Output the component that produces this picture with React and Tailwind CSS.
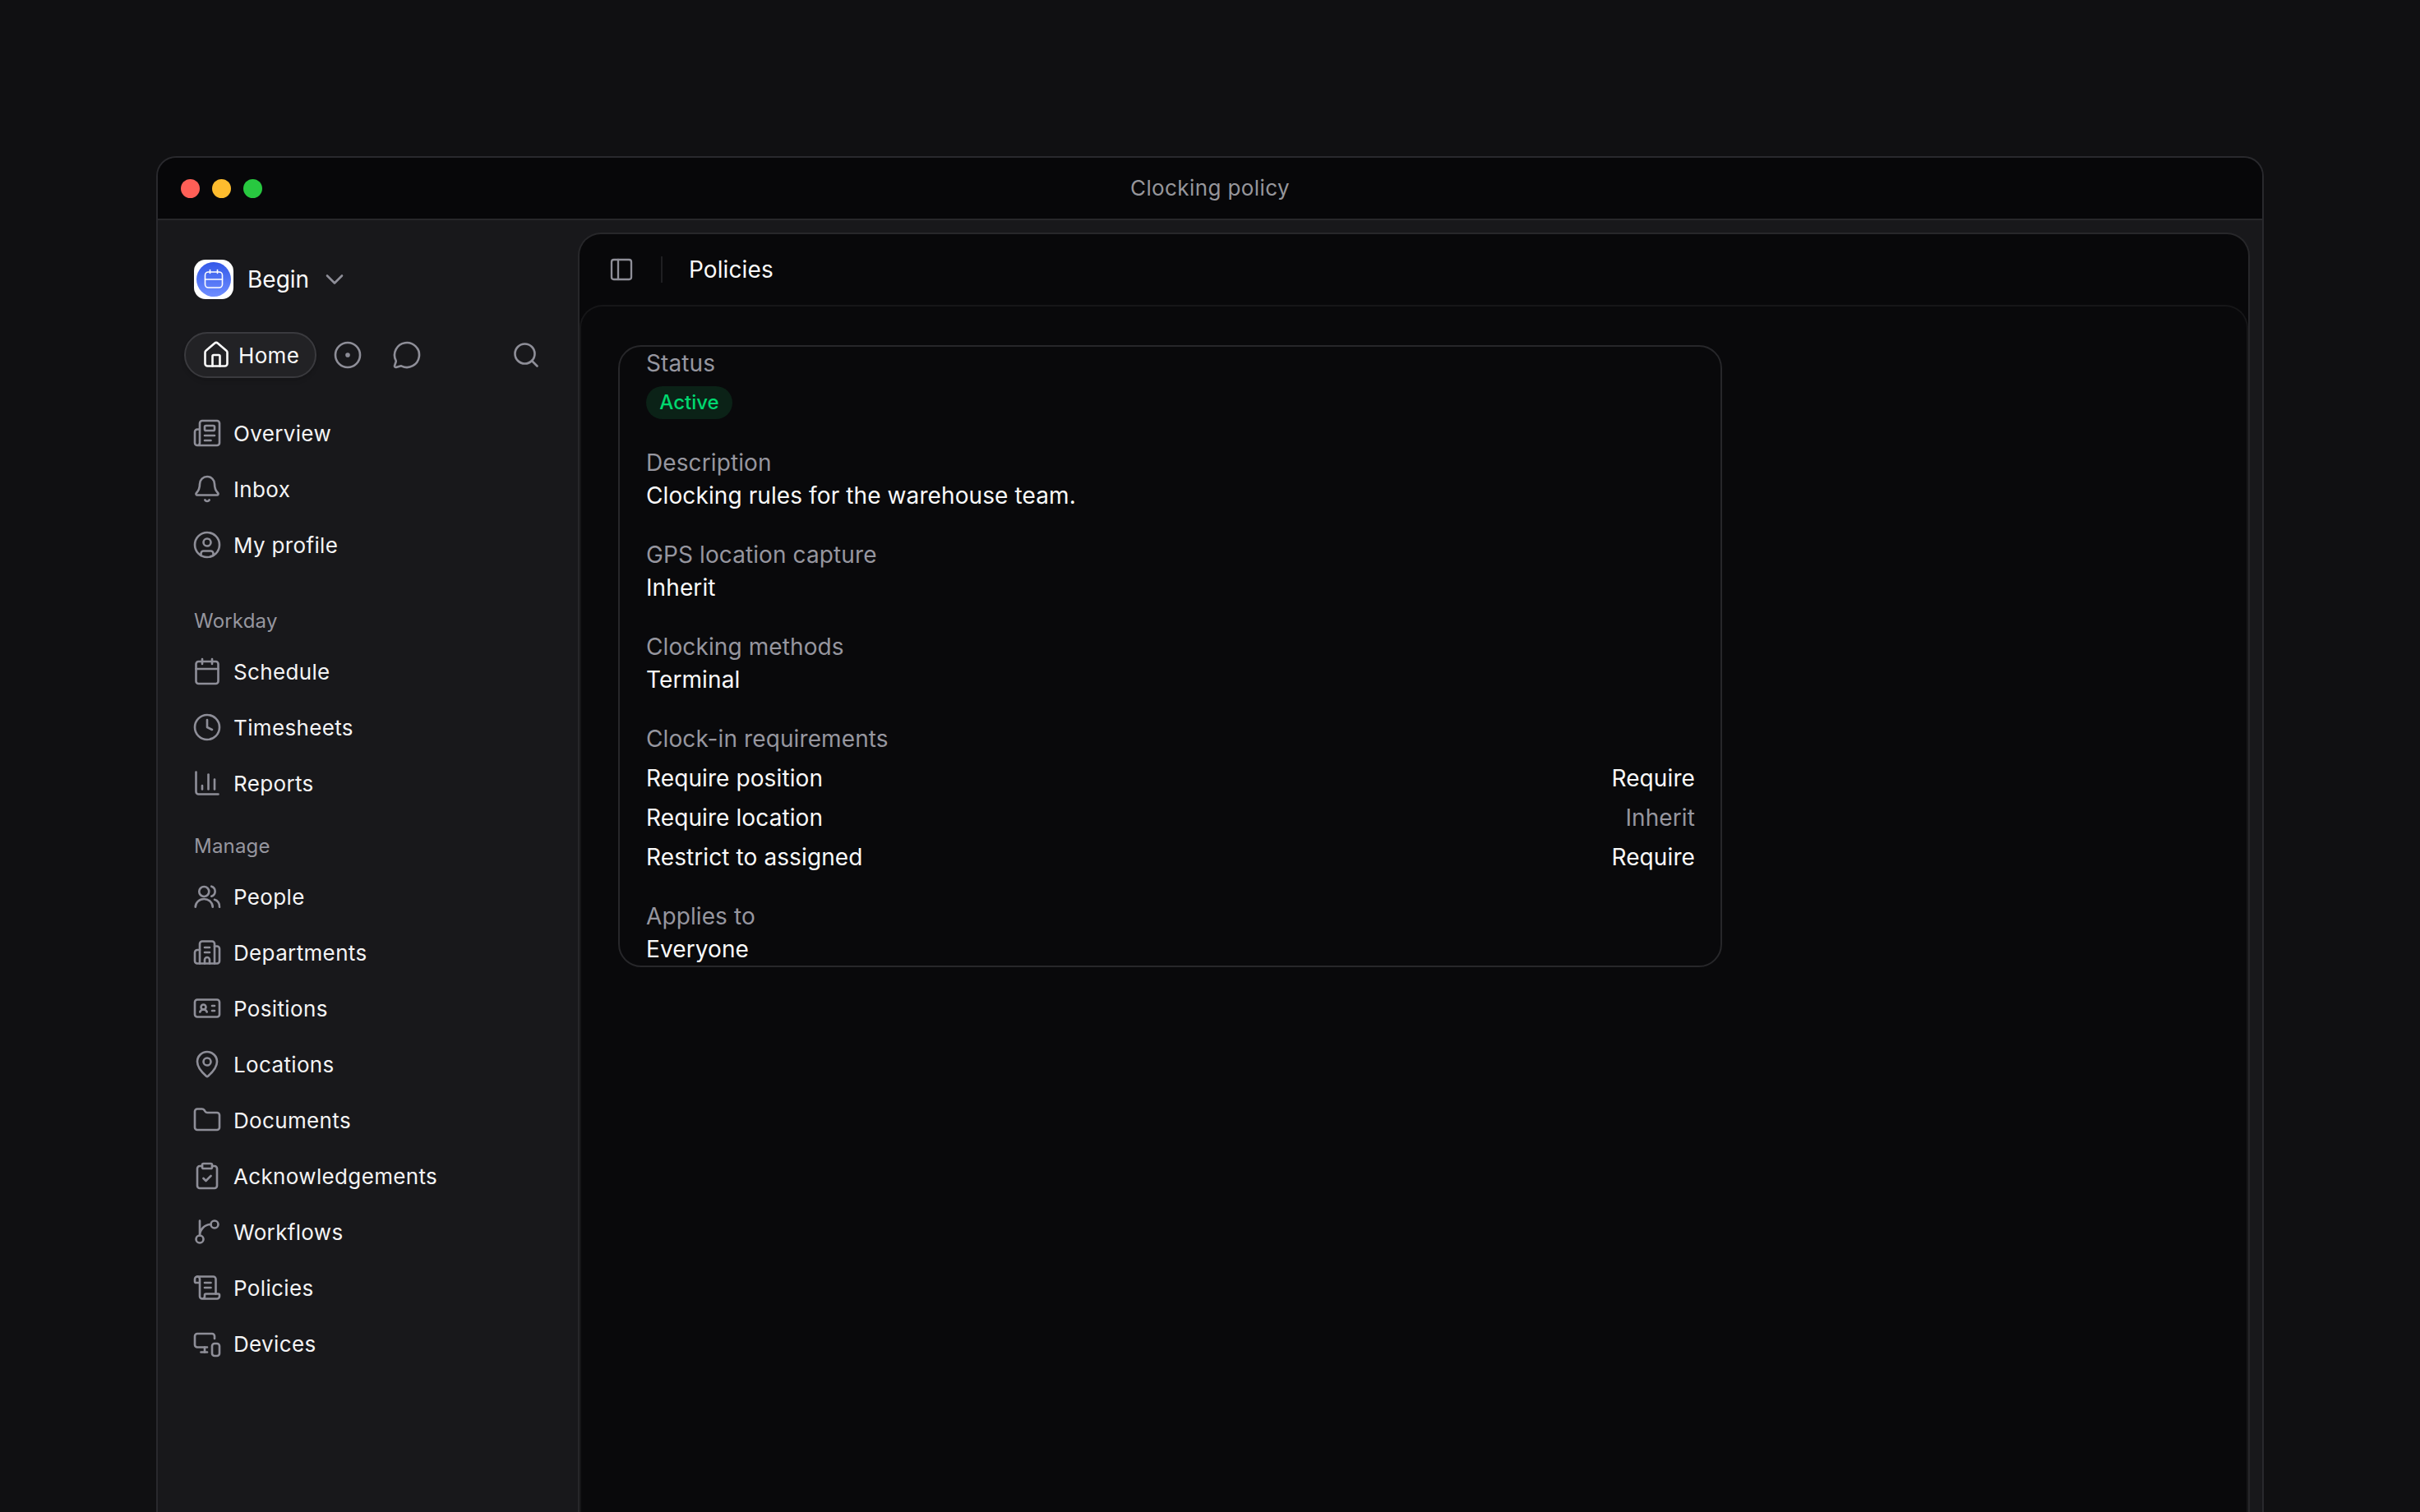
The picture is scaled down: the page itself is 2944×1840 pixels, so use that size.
import React from 'react';
import {
  Bell,
  Building2,
  Calendar,
  ChartColumn,
  ChevronDown,
  CircleDot,
  CircleUser,
  ClipboardCheck,
  Clock,
  Folder,
  House,
  IdCard,
  MapPin,
  MessageCircle,
  MonitorSmartphone,
  Newspaper,
  PanelLeft,
  ScrollText,
  Search,
} from 'lucide-react';

const PeopleIcon = ({ size, strokeWidth, className }) => (
  <svg width={size} height={size} viewBox="0 0 24 24" fill="none" stroke="currentColor" strokeWidth={strokeWidth} strokeLinecap="round" strokeLinejoin="round" className={className}>
    <circle cx="9.5" cy="8" r="4" />
    <path d="M15.5 3.8a4.2 4.2 0 0 1 0 8" />
    <path d="M2.5 20.5a7 6.5 0 0 1 14 0" />
    <path d="M18 14.5a5 5.5 0 0 1 4 6" />
  </svg>
);

const WorkflowIcon = ({ size, strokeWidth, className }) => (
  <svg width={size} height={size} viewBox="0 0 24 24" fill="none" stroke="currentColor" strokeWidth={strokeWidth} strokeLinecap="round" strokeLinejoin="round" className={className}>
    <path d="M15 6a9 9 0 0 0-9 9V3" />
    <circle cx="18" cy="6" r="3" />
    <circle cx="6" cy="18" r="3" />
  </svg>
);

const topItems = [
  { label: 'Overview', icon: Newspaper },
  { label: 'Inbox', icon: Bell },
  { label: 'My profile', icon: CircleUser },
];

const workdayItems = [
  { label: 'Schedule', icon: Calendar },
  { label: 'Timesheets', icon: Clock },
  { label: 'Reports', icon: ChartColumn },
];

const manageItems = [
  { label: 'People', icon: PeopleIcon },
  { label: 'Departments', icon: Building2 },
  { label: 'Positions', icon: IdCard },
  { label: 'Locations', icon: MapPin },
  { label: 'Documents', icon: Folder },
  { label: 'Acknowledgements', icon: ClipboardCheck },
  { label: 'Workflows', icon: WorkflowIcon },
  { label: 'Policies', icon: ScrollText },
  { label: 'Devices', icon: MonitorSmartphone },
];

const NavItem = ({ label, icon: Icon }) => (
  <div className="flex h-[68px] items-center gap-[14px] pl-[42px]">
    <Icon size={36} strokeWidth={1.75} className="shrink-0 text-[#8e8e98]" />
    <span className="text-[26px] tracking-[0.35px] text-[#f4f4f5]">{label}</span>
  </div>
);

const SectionLabel = ({ children, className }) => (
  <div className={`mb-[9px] flex h-9 items-center pl-[44px] text-[24px] tracking-[0.2px] text-[#96969f] ${className}`}>
    {children}
  </div>
);

const Field = ({ label, children }) => (
  <div className="flex flex-col">
    <div className="h-10 text-[28px] leading-10 tracking-[0.1px] text-[#96969f]">{label}</div>
    <div className="h-10 text-[28px] leading-10 tracking-[0.1px] text-[#fafafa]">{children}</div>
  </div>
);

const RequirementRow = ({ label, value, muted }) => (
  <div className="flex h-10 items-center justify-between text-[28px] leading-10 tracking-[0.1px] text-[#fafafa]">
    <span>{label}</span>
    <span className={muted ? 'text-[#96969f]' : ''}>{value}</span>
  </div>
);

const App = () => {
  return (
    <div className="h-[1840px] overflow-hidden bg-[#101012] px-[190px] pt-[190px] font-['Inter',sans-serif]">
      <div className="flex h-[1700px] flex-col rounded-t-[24px] border-2 border-b-0 border-[#29292d] bg-[#18181b]">
        <div className="relative flex h-[76px] shrink-0 items-center justify-center rounded-t-[22px] border-b-2 border-[#27272a] bg-[#070709]">
          <div className="absolute left-[28px] top-[26px] flex gap-[15px]">
            <span className="h-[23px] w-[23px] rounded-full bg-[#ff5f57]" />
            <span className="h-[23px] w-[23px] rounded-full bg-[#febc2e]" />
            <span className="h-[23px] w-[23px] rounded-full bg-[#28c840]" />
          </div>
          <span className="mb-px text-[26px] tracking-[0.4px] text-[#96969b]">Clocking policy</span>
        </div>

        <div className="flex flex-1">
          <aside className="w-[511px] shrink-0 pt-[48px]">
            <div className="flex h-12 items-center pl-[44px]">
              <div className="flex h-12 w-12 items-center justify-center rounded-[14px] bg-white">
                <div className="flex h-[42px] w-[42px] items-center justify-center rounded-[50%] bg-gradient-to-b from-[#3458e8] to-[#6f8dff]">
                  <svg width="28" height="28" viewBox="0 0 28 28" fill="none" stroke="white" strokeWidth="1.6" strokeLinecap="round">
                    <rect x="3.5" y="5" width="21" height="19" rx="4" />
                    <path d="M3.5 14h21" />
                    <path d="M9.5 2.5v4" />
                    <path d="M18.5 2.5v4" />
                  </svg>
                </div>
              </div>
              <span className="ml-[17px] text-[28px] text-[#fafafa]">Begin</span>
              <ChevronDown size={36} strokeWidth={1.75} className="ml-[13px] text-[#8e8e98]" />
            </div>

            <div className="mt-10 flex h-14 items-center pl-[32px] pr-[45px]">
              <div className="flex h-14 w-[161px] items-center gap-[9px] rounded-full border-2 border-[#3a3a3e] bg-[#222225] pl-[19px] shadow-md">
                <House size={36} strokeWidth={1.75} className="shrink-0 text-[#fafafa]" />
                <span className="text-[26px] tracking-[0.35px] text-[#fafafa]">Home</span>
              </div>
              <CircleDot size={36} strokeWidth={1.75} className="ml-5 text-[#8e8e98]" />
              <MessageCircle size={36} strokeWidth={1.75} className="ml-9 text-[#8e8e98]" />
              <Search size={36} strokeWidth={1.75} className="ml-auto text-[#8e8e98]" />
            </div>

            <nav className="mt-[33px]">
              {topItems.map((item) => (
                <NavItem key={item.label} {...item} />
              ))}
              <SectionLabel className="mt-[41px]">Workday</SectionLabel>
              {workdayItems.map((item) => (
                <NavItem key={item.label} {...item} />
              ))}
              <SectionLabel className="mt-[25px]">Manage</SectionLabel>
              {manageItems.map((item) => (
                <NavItem key={item.label} {...item} />
              ))}
            </nav>
          </aside>

          <main className="mr-[15px] mt-[15px] flex flex-1 flex-col rounded-t-[28px] border-2 border-b-0 border-[#27272a] bg-[#08080a]">
            <div className="flex h-[86px] shrink-0 items-center pl-[35px]">
              <PanelLeft size={32} strokeWidth={1.75} className="text-[#8e8e98]" />
              <div className="ml-[32px] h-8 w-0.5 bg-[#1f1f22]" />
              <span className="ml-[32px] text-[28px] tracking-[0.1px] text-[#fafafa]">Policies</span>
            </div>

            <div className="flex-1 rounded-t-[28px] border-2 border-b-0 border-[#161618] bg-[#09090b] pl-[45px] pt-[47px]">
              <div className="flex h-[757px] w-[1343px] flex-col gap-8 rounded-[28px] border-2 border-[#27272a] pl-[32px] pr-[31px]">
                <div className="mb-px flex flex-col">
                  <div className="h-10 text-[28px] leading-10 tracking-[0.1px] text-[#96969f]">Status</div>
                  <span className="mt-2 flex h-10 w-[105px] items-center justify-center rounded-full bg-[#0b2217] text-[24px] font-medium text-[#00d86f]">
                    Active
                  </span>
                </div>
                <Field label="Description">Clocking rules for the warehouse team.</Field>
                <Field label="GPS location capture">Inherit</Field>
                <Field label="Clocking methods">Terminal</Field>
                <div className="flex flex-col gap-2">
                  <div className="h-10 text-[28px] leading-10 tracking-[0.1px] text-[#96969f]">Clock-in requirements</div>
                  <RequirementRow label="Require position" value="Require" />
                  <RequirementRow label="Require location" value="Inherit" muted />
                  <RequirementRow label="Restrict to assigned" value="Require" />
                </div>
                <Field label="Applies to">Everyone</Field>
              </div>
            </div>
          </main>
        </div>
      </div>
    </div>
  );
};

export default App;
